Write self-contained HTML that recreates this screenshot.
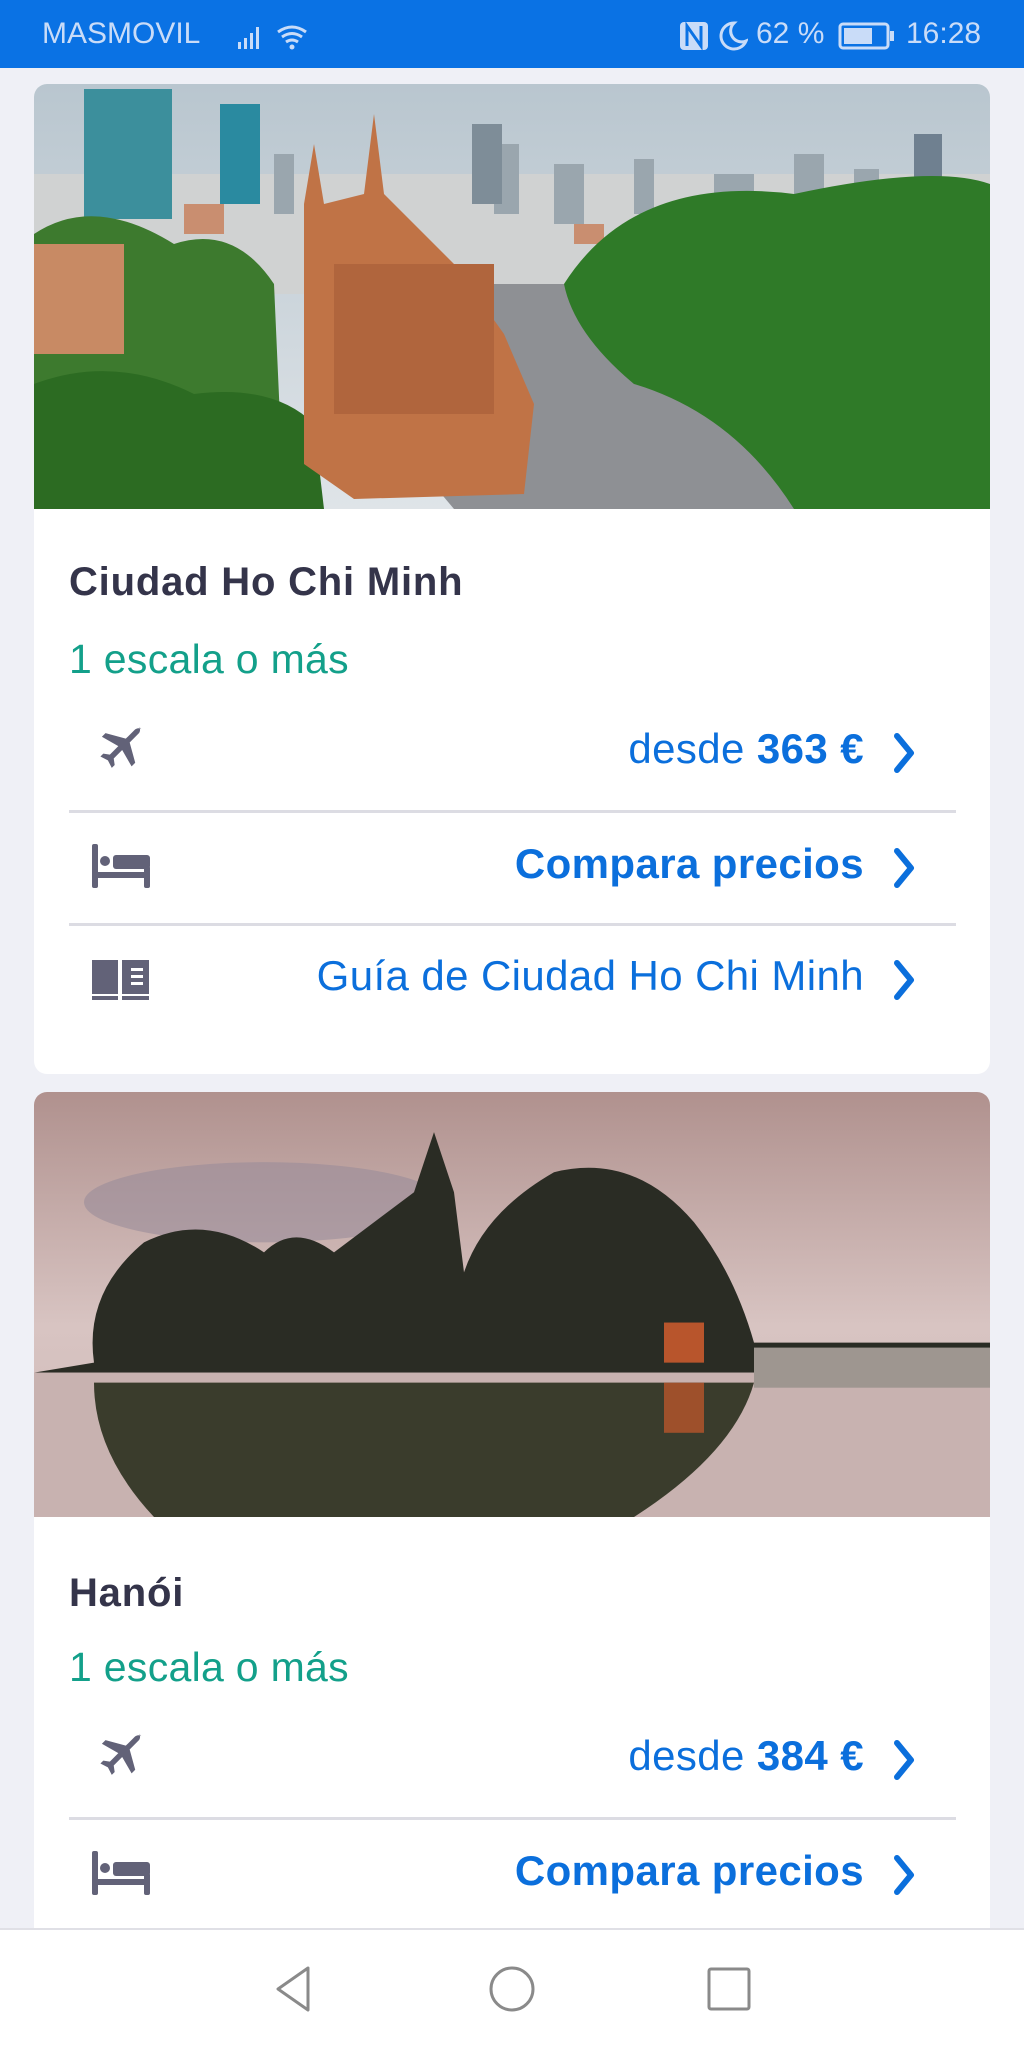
<!DOCTYPE html>
<html><head><meta charset="utf-8"><style>
*{margin:0;padding:0;box-sizing:border-box}
body{width:1024px;height:2048px;background:#eff0f6;font-family:"Liberation Sans",sans-serif;position:relative;overflow:hidden}
.status{position:absolute;left:0;top:0;width:1024px;height:68px;background:#0a72e4;color:#c9dcf8;font-size:30px}
.status span{position:absolute;top:17px}
.card{position:absolute;left:34px;width:956px;background:#fff;border-radius:13px;overflow:hidden}
.img{position:absolute;left:0;top:0;width:956px;height:425px}
.title{position:absolute;left:35px;font-size:40px;font-weight:bold;color:#34344a;line-height:1;letter-spacing:0.8px}
.esc{position:absolute;left:35px;font-size:41px;color:#13a08a;line-height:1;letter-spacing:0.3px}
.row{position:absolute;left:35px;width:887px;height:60px}
.row .t{position:absolute;right:92px;top:7px;font-size:42px;color:#0b6fdc;line-height:1;white-space:nowrap;letter-spacing:0.4px}
.row .t b{font-weight:bold}
.row svg.ic{position:absolute;left:22px;top:6px}
.row svg.ch{position:absolute;right:38px;top:11px}
.div{position:absolute;left:35px;width:887px;height:3px;background:#dcdce3}
.nav{position:absolute;left:0;top:1928px;width:1024px;height:120px;background:#fff;border-top:2px solid #e0e0e6}
</style></head><body>
<div class="status">
<span style="left:42px">MASMOVIL</span>
<svg style="position:absolute;left:236px;top:22px" width="80" height="30" viewBox="0 0 80 30"><g fill="#c9dcf8"><rect x="2" y="20" width="3" height="7"/><rect x="8" y="16" width="3" height="11"/><rect x="14" y="11" width="3" height="16"/><rect x="20" y="5" width="3" height="22"/></g><g fill="none" stroke="#c9dcf8" stroke-width="3"><path d="M42 10q14-10 28 0"/><path d="M46 15q10-7 20 0"/><path d="M50 20q6-4 12 0"/></g><circle cx="56" cy="25" r="2.5" fill="#c9dcf8"/></svg>
<svg style="position:absolute;left:678px;top:20px" width="34" height="32" viewBox="0 0 34 32"><rect x="2" y="2" width="28" height="28" rx="4" fill="#c9dcf8"/><path d="M9 26V6l14 20V6" fill="none" stroke="#0a72e4" stroke-width="3"/></svg>
<svg style="position:absolute;left:718px;top:20px" width="30" height="32" viewBox="0 0 30 32"><path d="M16 3a13 13 0 1 0 12 18a11 11 0 0 1-12-18z" fill="none" stroke="#c9dcf8" stroke-width="3"/></svg>
<span style="left:756px">62 %</span>
<svg style="position:absolute;left:838px;top:21px" width="58" height="30" viewBox="0 0 58 30"><rect x="2" y="3" width="48" height="24" rx="3" fill="none" stroke="#c9dcf8" stroke-width="3"/><rect x="6" y="7" width="28" height="16" fill="#c9dcf8"/><rect x="52" y="10" width="4" height="10" fill="#c9dcf8"/></svg>
<span style="left:906px">16:28</span>
</div>

<div class="card" style="top:84px;height:990px">
<svg class="img" viewBox="0 0 956 425" preserveAspectRatio="none">
<defs><linearGradient id="s1" x1="0" y1="0" x2="0" y2="1"><stop offset="0" stop-color="#b9c6cf"/><stop offset="1" stop-color="#dfe4e8"/></linearGradient></defs>
<rect width="956" height="425" fill="url(#s1)"/>
<rect x="0" y="90" width="956" height="120" fill="#d0d2d2"/>
<g fill="#9aa6ae"><rect x="240" y="70" width="20" height="60"/><rect x="460" y="60" width="25" height="70"/><rect x="520" y="80" width="30" height="60"/><rect x="600" y="75" width="20" height="55"/><rect x="680" y="90" width="40" height="50"/><rect x="760" y="70" width="30" height="60"/><rect x="820" y="85" width="25" height="50"/></g>
<g fill="#c98e70"><rect x="150" y="120" width="40" height="30"/><rect x="540" y="140" width="30" height="20"/><rect x="620" y="150" width="40" height="25"/></g>
<rect x="50" y="5" width="88" height="130" fill="#3c8f9c"/>
<rect x="186" y="20" width="40" height="100" fill="#2a8aa0"/>
<rect x="438" y="40" width="30" height="80" fill="#7e8d98"/>
<rect x="880" y="50" width="28" height="60" fill="#6f8090"/>
<polygon points="380,200 956,200 956,425 420,425 340,330" fill="#8e9094"/>
<path d="M530 200 Q600 90 760 110 Q900 80 956 100 L956 425 L760 425 Q700 330 600 300 Q540 250 530 200z" fill="#2f7a28"/>
<path d="M0 150 Q60 110 140 160 Q200 140 240 200 L250 425 L0 425z" fill="#3d7a2e"/>
<rect x="0" y="160" width="90" height="110" fill="#c88a64"/>
<path d="M0 300 Q80 270 160 310 Q240 300 280 340 L290 425 L0 425z" fill="#2c6b22"/>
<polygon points="270,120 280,60 290,120 330,110 340,30 350,110 380,140 420,180 470,250 500,320 490,410 320,415 270,380" fill="#c07346"/>
<rect x="300" y="180" width="160" height="150" fill="#b0653d"/>
</svg>
<div class="title" style="top:478px">Ciudad Ho Chi Minh</div>
<div class="esc" style="top:555px">1 escala o más</div>
<div class="row" style="top:637px">
<svg class="ic" width="58" height="58" viewBox="0 0 24 24" style="top:0"><path fill="#626278" d="M21 3.5c-.8-.8-2.2-.6-3 .2l-3.6 3.6L6 5 4.5 6.5l6.8 3.9-3.5 3.5-2.7-.4-1.2 1.2 3.1 1.6 1.6 3.1 1.2-1.2-.4-2.7 3.5-3.5 3.9 6.8 1.5-1.5-2.3-8.4 3.6-3.6c.8-.8 1-2.2.2-3z"/></svg>
<div class="t">desde <b>363 €</b></div>
<svg class="ch" width="28" height="42" viewBox="0 0 28 42"><path d="M7 4l14 17L7 38" fill="none" stroke="#0b6fdc" stroke-width="6" stroke-linecap="round" stroke-linejoin="round"/></svg>
</div>
<div class="div" style="top:726px"></div>
<div class="row" style="top:752px">
<svg class="ic" width="60" height="50" viewBox="0 0 60 50"><g fill="#626278"><rect x="1" y="2" width="6" height="44" rx="2"/><rect x="1" y="30" width="58" height="6"/><rect x="53" y="24" width="6" height="22" rx="2"/><circle cx="14" cy="19" r="5"/><rect x="22" y="13" width="37" height="14" rx="3"/></g></svg>
<div class="t"><b>Compara precios</b></div>
<svg class="ch" width="28" height="42" viewBox="0 0 28 42"><path d="M7 4l14 17L7 38" fill="none" stroke="#0b6fdc" stroke-width="6" stroke-linecap="round" stroke-linejoin="round"/></svg>
</div>
<div class="div" style="top:839px"></div>
<div class="row" style="top:864px">
<svg class="ic" width="60" height="50" viewBox="0 0 60 50"><g fill="#626278"><path d="M1 6h26v34H1z"/><path d="M31 6h27v34H31z"/><rect x="1" y="42" width="26" height="4"/><rect x="31" y="42" width="27" height="4"/></g><g fill="#fff"><rect x="40" y="14" width="12" height="3"/><rect x="40" y="21" width="12" height="3"/><rect x="40" y="28" width="12" height="3"/></g></svg>
<div class="t">Guía de Ciudad Ho Chi Minh</div>
<svg class="ch" width="28" height="42" viewBox="0 0 28 42"><path d="M7 4l14 17L7 38" fill="none" stroke="#0b6fdc" stroke-width="6" stroke-linecap="round" stroke-linejoin="round"/></svg>
</div>
</div>

<div class="card" style="top:1092px;height:900px">
<svg class="img" viewBox="0 0 956 424" preserveAspectRatio="none">
<defs><linearGradient id="s2" x1="0" y1="0" x2="0" y2="1"><stop offset="0" stop-color="#b0918e"/><stop offset=".55" stop-color="#d8c4c2"/><stop offset="1" stop-color="#cdb8b6"/></linearGradient></defs>
<rect width="956" height="424" fill="url(#s2)"/>
<ellipse cx="230" cy="110" rx="180" ry="40" fill="#9a8c9a" opacity=".6"/>
<path d="M60 270 Q50 200 110 150 Q170 120 230 160 Q260 130 300 160 L380 100 L400 40 L420 100 L430 180 Q450 120 520 80 Q600 60 660 130 Q700 180 720 250 L956 250 L956 280 L0 280z" fill="#2a2c24"/>
<rect x="630" y="230" width="40" height="40" fill="#b8552c"/>
<rect x="0" y="280" width="956" height="144" fill="#c8b2b0"/>
<path d="M60 290 L720 290 Q700 360 600 424 L120 424 Q60 360 60 290z" fill="#3a3c2c"/>
<rect x="630" y="290" width="40" height="50" fill="#b8552c" opacity=".8"/>
<rect x="720" y="255" width="236" height="40" fill="#9e9690"/>
</svg>
<div class="title" style="top:481px">Hanói</div>
<div class="esc" style="top:555px">1 escala o más</div>
<div class="row" style="top:636px">
<svg class="ic" width="58" height="58" viewBox="0 0 24 24" style="top:0"><path fill="#626278" d="M21 3.5c-.8-.8-2.2-.6-3 .2l-3.6 3.6L6 5 4.5 6.5l6.8 3.9-3.5 3.5-2.7-.4-1.2 1.2 3.1 1.6 1.6 3.1 1.2-1.2-.4-2.7 3.5-3.5 3.9 6.8 1.5-1.5-2.3-8.4 3.6-3.6c.8-.8 1-2.2.2-3z"/></svg>
<div class="t">desde <b>384 €</b></div>
<svg class="ch" width="28" height="42" viewBox="0 0 28 42"><path d="M7 4l14 17L7 38" fill="none" stroke="#0b6fdc" stroke-width="6" stroke-linecap="round" stroke-linejoin="round"/></svg>
</div>
<div class="div" style="top:725px"></div>
<div class="row" style="top:751px">
<svg class="ic" width="60" height="50" viewBox="0 0 60 50"><g fill="#626278"><rect x="1" y="2" width="6" height="44" rx="2"/><rect x="1" y="30" width="58" height="6"/><rect x="53" y="24" width="6" height="22" rx="2"/><circle cx="14" cy="19" r="5"/><rect x="22" y="13" width="37" height="14" rx="3"/></g></svg>
<div class="t"><b>Compara precios</b></div>
<svg class="ch" width="28" height="42" viewBox="0 0 28 42"><path d="M7 4l14 17L7 38" fill="none" stroke="#0b6fdc" stroke-width="6" stroke-linecap="round" stroke-linejoin="round"/></svg>
</div>
</div>

<div class="nav">
<svg style="position:absolute;left:268px;top:34px" width="50" height="50" viewBox="0 0 50 50"><path d="M40 4L10 25l30 21z" fill="none" stroke="#8a8a8a" stroke-width="3" stroke-linejoin="round"/></svg>
<svg style="position:absolute;left:487px;top:34px" width="50" height="50" viewBox="0 0 50 50"><circle cx="25" cy="25" r="21" fill="none" stroke="#8a8a8a" stroke-width="3"/></svg>
<svg style="position:absolute;left:705px;top:35px" width="48" height="48" viewBox="0 0 48 48"><rect x="4" y="4" width="40" height="40" rx="2" fill="none" stroke="#8a8a8a" stroke-width="3"/></svg>
</div>
</body></html>
